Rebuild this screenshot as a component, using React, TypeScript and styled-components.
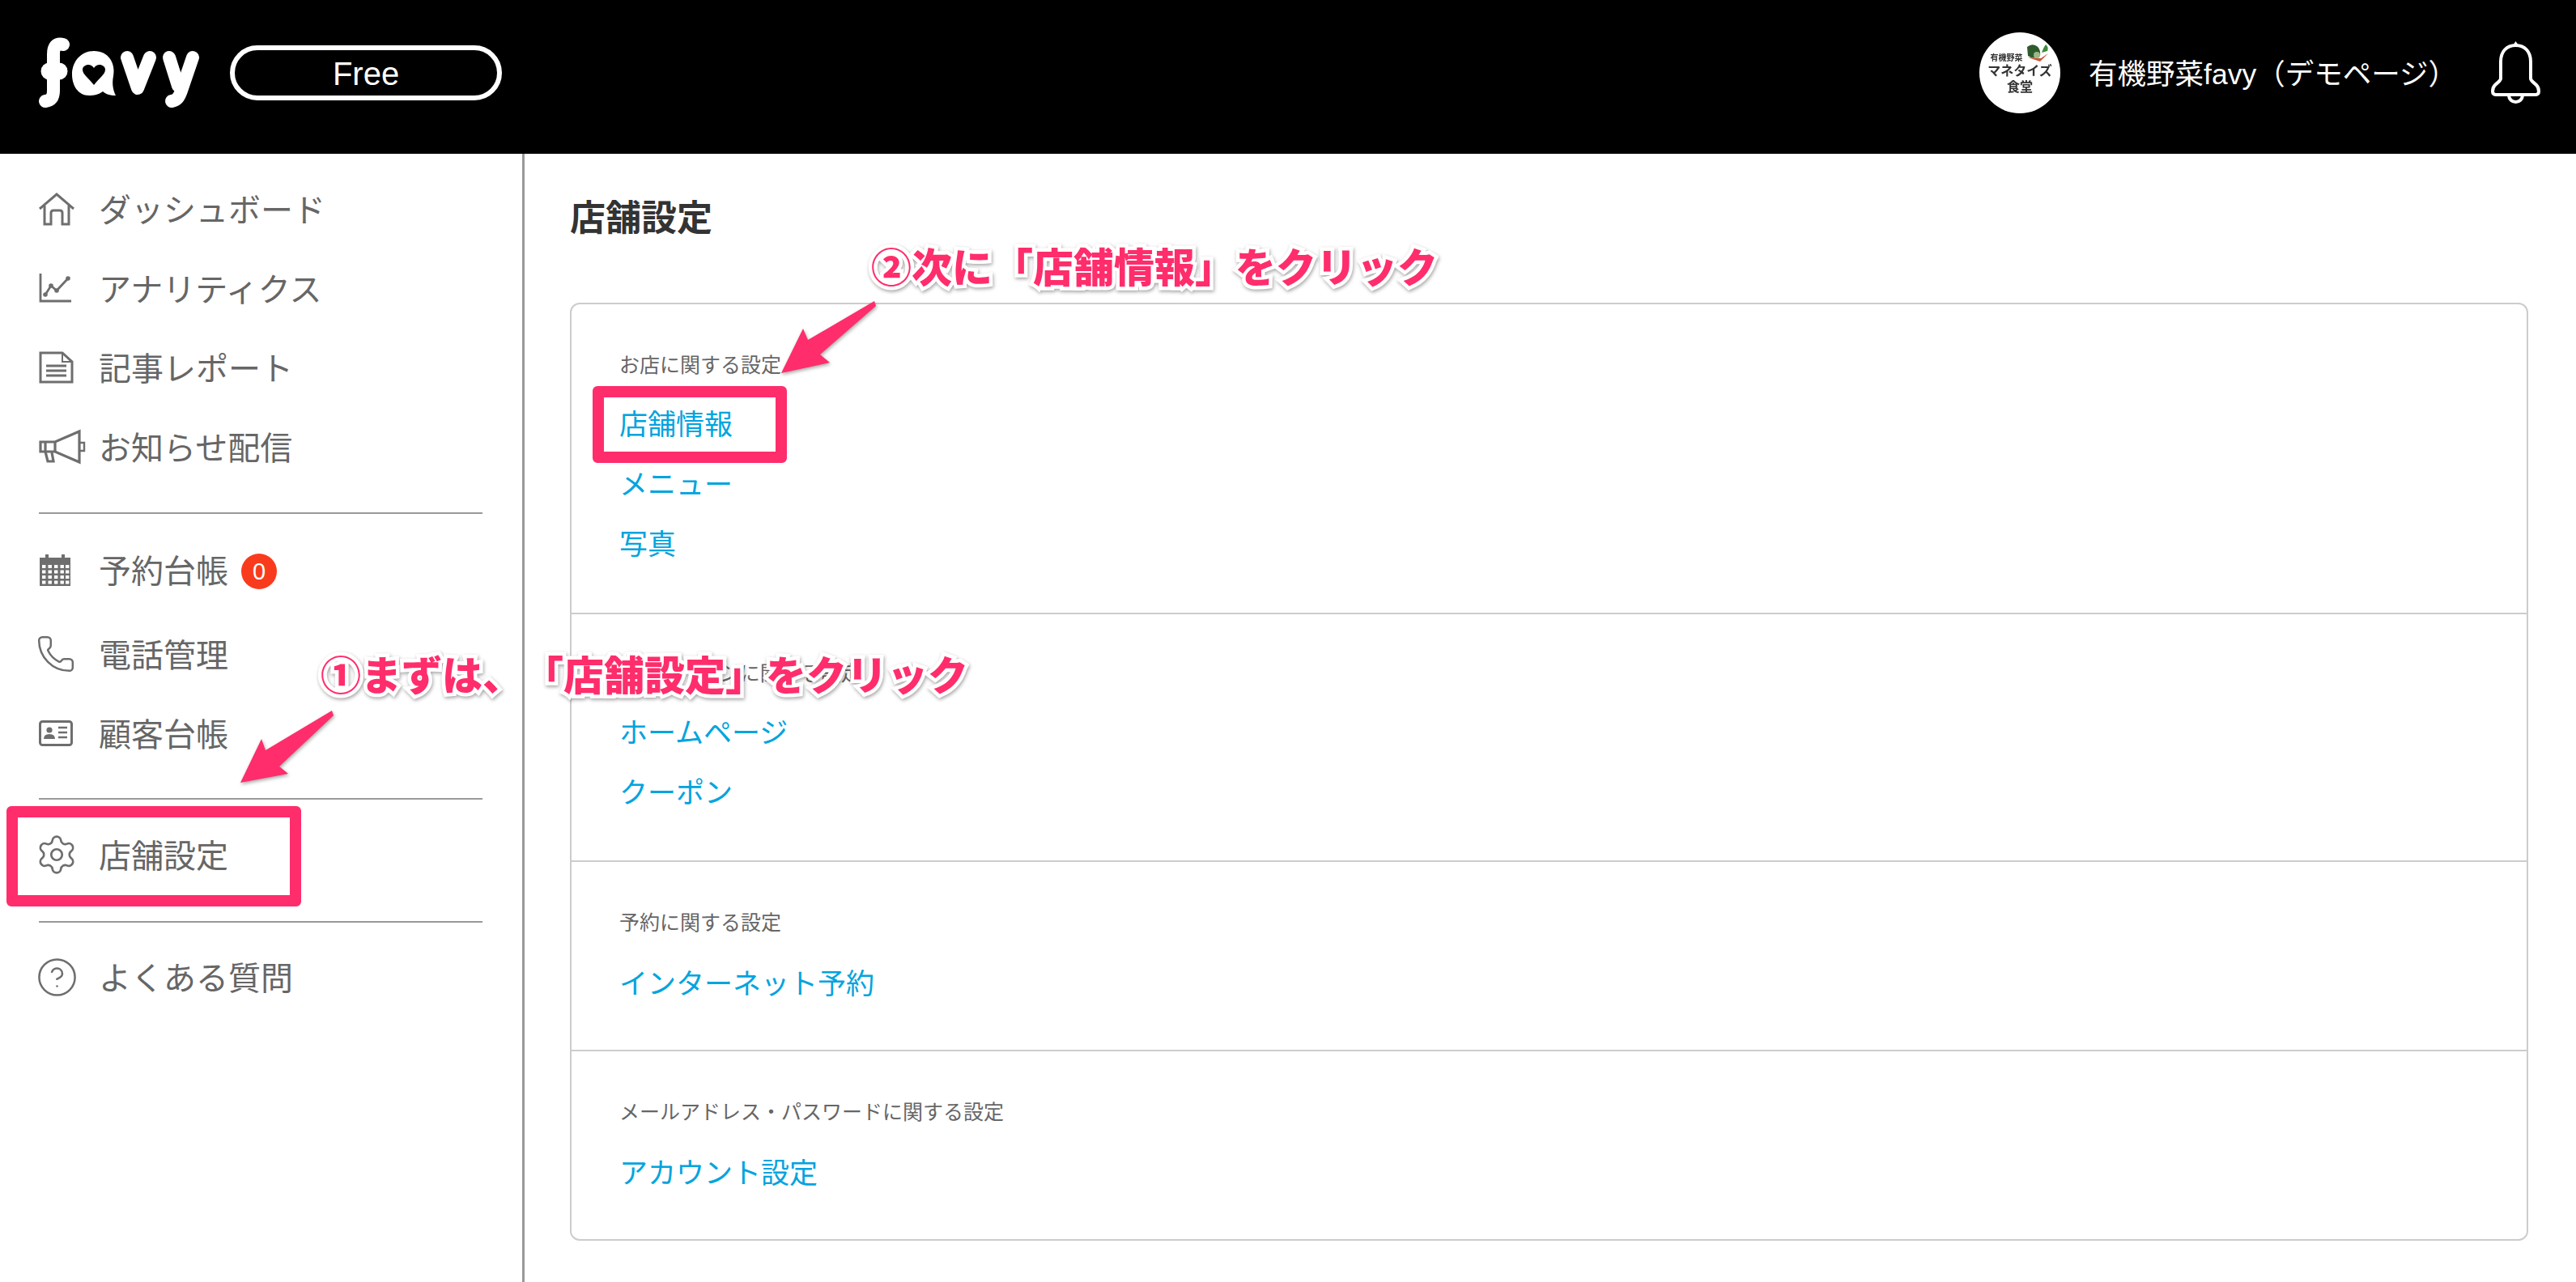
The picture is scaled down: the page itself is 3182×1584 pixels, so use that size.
import React from 'react';
import styled, { createGlobalStyle } from 'styled-components';
import { CircleHelp, Phone, Settings } from 'lucide-react';

const FONT = '"Liberation Sans", "Noto Sans CJK JP", sans-serif';
const PINK = '#ff2d6b';
const GREY = '#666666';
const ICON = '#6e6e6e';

const GlobalStyle = createGlobalStyle`
  html, body {
    margin: 0;
    padding: 0;
    background: #fff;
    font-family: ${FONT};
  }
  * { box-sizing: border-box; }
`;

const Page = styled.div`
  position: relative;
  width: 3182px;
  height: 1584px;
  overflow: hidden;
  display: flex;
  flex-direction: column;
`;

/* header */
const Header = styled.header`
  height: 190px;
  flex: none;
  background: #000;
  color: #fff;
  display: flex;
  align-items: center;
  padding: 0 44px 10px 48px;
`;

const Logo = styled.svg`
  width: 202px;
  height: 90px;
  margin-top: 2px;
  flex: none;
`;

const PlanPill = styled.div`
  width: 336px;
  height: 68px;
  margin-left: 34px;
  padding-top: 2px;
  border: 6px solid #fff;
  border-radius: 34px;
  display: flex;
  align-items: center;
  justify-content: center;
  font-size: 40px;
  line-height: 1;
`;

const HeaderRight = styled.div`
  margin-left: auto;
  display: flex;
  align-items: center;
`;

const Avatar = styled.div`
  width: 100px;
  height: 100px;
  border-radius: 50%;
  background: #fff;
  color: #333;
  display: flex;
  flex-direction: column;
  align-items: center;
  justify-content: center;
  font-weight: 700;
  filter: blur(0.7px);
`;

const AvatarTop = styled.div`
  display: flex;
  align-items: flex-end;
  gap: 3px;
  font-size: 10px;
  line-height: 12px;
  margin-top: -8px;
`;

const AvatarLine = styled.div`
  font-size: 16px;
  line-height: 20px;
  white-space: nowrap;
`;

const ShopName = styled.div`
  margin: 5px 0 0 35px;
  font-size: 35.5px;
  line-height: 1;
  white-space: nowrap;
`;

const Bell = styled.svg`
  width: 61px;
  height: 78px;
  margin-left: 42px;
  flex: none;
`;

/* layout */
const Body = styled.div`
  flex: 1;
  display: flex;
  min-height: 0;
`;

const Sidebar = styled.nav`
  width: 648px;
  flex: none;
  border-right: 3px solid #999;
  padding: 19px 49px 0 48px;
`;

const NavGroup = styled.div<{ $top: number; $bottom: number }>`
  padding: ${(p) => p.$top}px 0 ${(p) => p.$bottom}px;
  border-bottom: 2px solid #999;

  &:last-child {
    border-bottom: none;
  }
`;

const NavRow = styled.div<{ $gap?: number }>`
  height: 98px;
  margin-bottom: ${(p) => p.$gap ?? 0}px;
  display: flex;
  align-items: center;
  color: ${GREY};
  font-size: 40px;
  white-space: nowrap;
`;

const NavLabel = styled.span`
  margin-bottom: 2px;
`;

const NavIcon = styled.span<{ $shift?: number }>`
  width: 74px;
  flex: none;
  display: flex;
  align-items: center;
  color: ${ICON};

  svg {
    display: block;
    overflow: visible;
    margin-left: ${(p) => p.$shift ?? 0}px;
  }
`;

const Badge = styled.span`
  width: 44px;
  height: 44px;
  margin-left: 16px;
  margin-top: 4px;
  border-radius: 50%;
  background: #f93b1d;
  color: #fff;
  font-size: 29px;
  display: flex;
  align-items: center;
  justify-content: center;
`;

const Main = styled.main`
  flex: 1;
  padding: 58px 59px 0 56px;
`;

const Title = styled.h1`
  margin: 0 0 82px;
  font-size: 44px;
  line-height: 44px;
  font-weight: 700;
  color: #333;
`;

const Card = styled.div`
  border: 2px solid #ccc;
  border-radius: 12px;
`;

const Section = styled.section<{ $top: number; $bottom: number }>`
  padding: ${(p) => p.$top}px 59px ${(p) => p.$bottom}px;
  border-top: 2px solid #ccc;

  &:first-child {
    border-top: none;
  }
`;

const SectionLabel = styled.div<{ $gap?: number }>`
  font-size: 25px;
  line-height: 30px;
  color: ${GREY};
  margin-bottom: ${(p) => p.$gap ?? 20}px;
`;

const SectionLink = styled.a`
  display: flex;
  align-items: center;
  height: 74px;
  padding-bottom: 4px;
  font-size: 35px;
  color: #00a4de;
  text-decoration: none;
`;

/* annotations drawn over the page */
const Highlight = styled.div<{ $x: number; $y: number; $w: number; $h: number }>`
  position: absolute;
  left: ${(p) => p.$x}px;
  top: ${(p) => p.$y}px;
  width: ${(p) => p.$w}px;
  height: ${(p) => p.$h}px;
  border: 14px solid ${PINK};
  border-radius: 6px;
`;

const Callout = styled.div<{ $x: number; $y: number }>`
  position: absolute;
  left: ${(p) => p.$x}px;
  top: ${(p) => p.$y}px;
  font-size: 50px;
  line-height: 1;
  font-weight: 900;
  font-family: "Noto Sans CJK JP", sans-serif;
  color: ${PINK};
  white-space: nowrap;
  text-spacing-trim: space-all;
  -webkit-text-stroke: 9px #fff;
  paint-order: stroke fill;
  filter: drop-shadow(1px 2px 2px rgba(0, 0, 0, 0.35));
`;

const ArrowLayer = styled.svg`
  position: absolute;
  left: 0;
  top: 0;
  width: 3182px;
  height: 1584px;
  pointer-events: none;
  filter: drop-shadow(1px 2px 2px rgba(0, 0, 0, 0.35));
`;

const HomeIcon = () => (
  <svg width="44" height="40" viewBox="0 0 44 40" fill="none" stroke="currentColor" strokeWidth="3">
    <path d="M1 20 L22 2 L43 20" />
    <path d="M7 16 V39 H15 V25 Q15 22 18 22 H26 Q29 22 29 25 V39 H37 V16" />
  </svg>
);

const ChartIcon = () => (
  <svg width="42" height="36" viewBox="0 0 42 36" fill="none" stroke="currentColor" strokeWidth="2.8">
    <path d="M2 0 V34 H40" />
    <path d="M8 26 L15 15 L22 21 L36 6" />
    <g fill="currentColor" stroke="none">
      <circle cx="8" cy="26" r="2.8" />
      <circle cx="15" cy="15" r="2.8" />
      <circle cx="22" cy="21" r="2.8" />
      <circle cx="36" cy="6" r="2.8" />
    </g>
  </svg>
);

const ReportIcon = () => (
  <svg width="42" height="40" viewBox="0 0 42 40" fill="none" stroke="currentColor" strokeWidth="3">
    <path d="M2 2 H29 L41 13 V38 H2 Z" />
    <path d="M29 2 V13 H41" strokeWidth="2" />
    <path d="M9 18 H34 M9 24 H34 M9 30 H34" />
  </svg>
);

const MegaphoneIcon = () => (
  <svg width="58" height="40" viewBox="0 0 58 40" fill="none" stroke="currentColor" strokeWidth="3.2">
    <path d="M2 14 H20 L50 1 V39 L20 26 H2 Z" />
    <path d="M20 14 V26" />
    <path d="M8 26 L11 38 H18 L16 27" />
    <path d="M50 15 H56 V25 H50" strokeWidth="2.4" />
    <path d="M8 15 V25" />
  </svg>
);

const CalendarIcon = () => (
  <svg width="40" height="40" viewBox="0 0 40 40">
    <path d="M1 5 H8 V1 H12 V5 H28 V1 H32 V5 H39 V40 H1 Z" fill="currentColor" />
    <g fill="#fff">
      {[14, 20.5, 27, 33.5].map((y) =>
        [4, 11.5, 19, 26.5, 33].map((x) => (
          <rect key={`${x}-${y}`} x={x} y={y} width="4.4" height="4" />
        )),
      )}
    </g>
  </svg>
);

const IdCardIcon = () => (
  <svg width="42" height="32" viewBox="0 0 42 32" fill="none" stroke="currentColor" strokeWidth="3">
    <rect x="1.5" y="1.5" width="39" height="29" rx="3" />
    <circle cx="13" cy="12" r="3.6" fill="currentColor" stroke="none" />
    <path d="M6 23 Q6 17 13 17 Q20 17 20 23 Z" fill="currentColor" stroke="none" />
    <path d="M24 9 H35 M24 15 H35 M24 21 H35" strokeWidth="2.4" />
  </svg>
);

const VeggieIcon = () => (
  <svg width="30" height="24" viewBox="0 0 30 24">
    <path d="M2 4 Q8 -1 14 3 Q19 7 18 15 Q10 20 3 15 Z" fill="#2f5a2c" />
    <path d="M20 11 Q23 3 25 1 Q29 4 27 9 Z" fill="#3f8a3c" />
    <path d="M3 17 L18 22 L28 12 L19 18 Z" fill="#c9583a" />
    <circle cx="14" cy="14" r="4" fill="#9bb88a" />
  </svg>
);

const App: React.FC = () => {
  return (
    <Page>
      <GlobalStyle />
      <Header>
        <Logo viewBox="48 46 202 90" role="img" aria-label="favy">
          <g fill="none" stroke="#fff" strokeWidth="16" strokeLinecap="round" strokeLinejoin="round">
            <path d="M78 55 C69 53 66 58 66 67 V112 C66 120 63 124 56 125" />
            <path d="M61 88 H73" strokeWidth="21" />
            <path d="M157 71 L170 109 L185 71" />
            <path d="M209 71 L220 106" />
            <path d="M238 71 L224 112 C221 121 218 124 212 125" />
          </g>
          <path
            fill="#fff"
            fillRule="evenodd"
            d="M116 63 C134 63 143 78 140 94 C138 104 140 112 143 118 C136 118 130 116 127 113 C122 117 116 118 110 118 C96 118 89 105 89 92 C89 76 100 63 116 63 Z M116 105 C110 97 102 92 102 86 C102 80 112 77 116 84 C120 77 130 80 130 86 C130 92 122 97 116 105 Z"
          />
        </Logo>
        <PlanPill>Free</PlanPill>
        <HeaderRight>
          <Avatar>
            <AvatarTop>
              有機野菜
              <VeggieIcon />
            </AvatarTop>
            <AvatarLine>マネタイズ</AvatarLine>
            <AvatarLine>食堂</AvatarLine>
          </Avatar>
          <ShopName>有機野菜favy（デモページ）</ShopName>
          <Bell viewBox="0 0 61 78" fill="none" stroke="#fff" strokeWidth="4">
            <path d="M30.5 5 C19 5 12 13 12 25 V46 C12 49 9 50 5 54 C2 57 2 60 2 62 C2 65 4 66 7 66 H54 C57 66 59 65 59 62 C59 60 59 57 56 54 C52 50 49 49 49 46 V25 C49 13 42 5 30.5 5 Z" />
            <path d="M27 5 L30.5 0 L34 5 Z" fill="#fff" stroke="none" />
            <path d="M22 66 C22 78 39 78 39 66" />
          </Bell>
        </HeaderRight>
      </Header>

      <Body>
        <Sidebar>
          <NavGroup $top={0} $bottom={32}>
            <NavRow>
              <NavIcon><HomeIcon /></NavIcon><NavLabel>ダッシュボード</NavLabel>
            </NavRow>
            <NavRow>
              <NavIcon><ChartIcon /></NavIcon><NavLabel>アナリティクス</NavLabel>
            </NavRow>
            <NavRow>
              <NavIcon><ReportIcon /></NavIcon><NavLabel>記事レポート</NavLabel>
            </NavRow>
            <NavRow>
              <NavIcon><MegaphoneIcon /></NavIcon><NavLabel>お知らせ配信</NavLabel>
            </NavRow>
          </NavGroup>
          <NavGroup $top={20} $bottom={31}>
            <NavRow $gap={6}>
              <NavIcon><CalendarIcon /></NavIcon><NavLabel>予約台帳</NavLabel><Badge>0</Badge>
            </NavRow>
            <NavRow>
              <NavIcon $shift={-4}><Phone size={50} strokeWidth={1.2} /></NavIcon><NavLabel>電話管理</NavLabel>
            </NavRow>
            <NavRow>
              <NavIcon><IdCardIcon /></NavIcon><NavLabel>顧客台帳</NavLabel>
            </NavRow>
          </NavGroup>
          <NavGroup $top={19} $bottom={33}>
            <NavRow>
              <NavIcon $shift={-5}><Settings size={54} strokeWidth={1.2} /></NavIcon><NavLabel>店舗設定</NavLabel>
            </NavRow>
          </NavGroup>
          <NavGroup $top={18} $bottom={0}>
            <NavRow>
              <NavIcon $shift={-4}><CircleHelp size={53} strokeWidth={1.15} /></NavIcon><NavLabel>よくある質問</NavLabel>
            </NavRow>
          </NavGroup>
        </Sidebar>

        <Main>
          <Title>店舗設定</Title>
          <Card>
            <Section $top={60} $bottom={49}>
              <SectionLabel>お店に関する設定</SectionLabel>
              <SectionLink>店舗情報</SectionLink>
              <SectionLink>メニュー</SectionLink>
              <SectionLink>写真</SectionLink>
            </Section>
            <Section $top={58} $bottom={48}>
              <SectionLabel>ホームページに関する設定</SectionLabel>
              <SectionLink>ホームページ</SectionLink>
              <SectionLink>クーポン</SectionLink>
            </Section>
            <Section $top={60} $bottom={46}>
              <SectionLabel $gap={22}>予約に関する設定</SectionLabel>
              <SectionLink>インターネット予約</SectionLink>
            </Section>
            <Section $top={60} $bottom={46}>
              <SectionLabel $gap={22}>メールアドレス・パスワードに関する設定</SectionLabel>
              <SectionLink>アカウント設定</SectionLink>
            </Section>
          </Card>
        </Main>
      </Body>

      <Highlight $x={8} $y={996} $w={364} $h={124} />
      <Highlight $x={732} $y={477} $w={240} $h={95} />
      <ArrowLayer viewBox="0 0 3182 1584">
        <polygon fill={PINK} points="410,878 328,927 323,913 297,967 356,956 345,947 412,884" />
        <polygon fill={PINK} points="1080,372 998,420 992,406 965,461 1025,448 1013,438 1082,378" />
      </ArrowLayer>
      <Callout $x={396} $y={806}>①まずは、「店舗設定」をクリック</Callout>
      <Callout $x={1076} $y={302}>②次に「店舗情報」をクリック</Callout>
    </Page>
  );
};

export default App;
